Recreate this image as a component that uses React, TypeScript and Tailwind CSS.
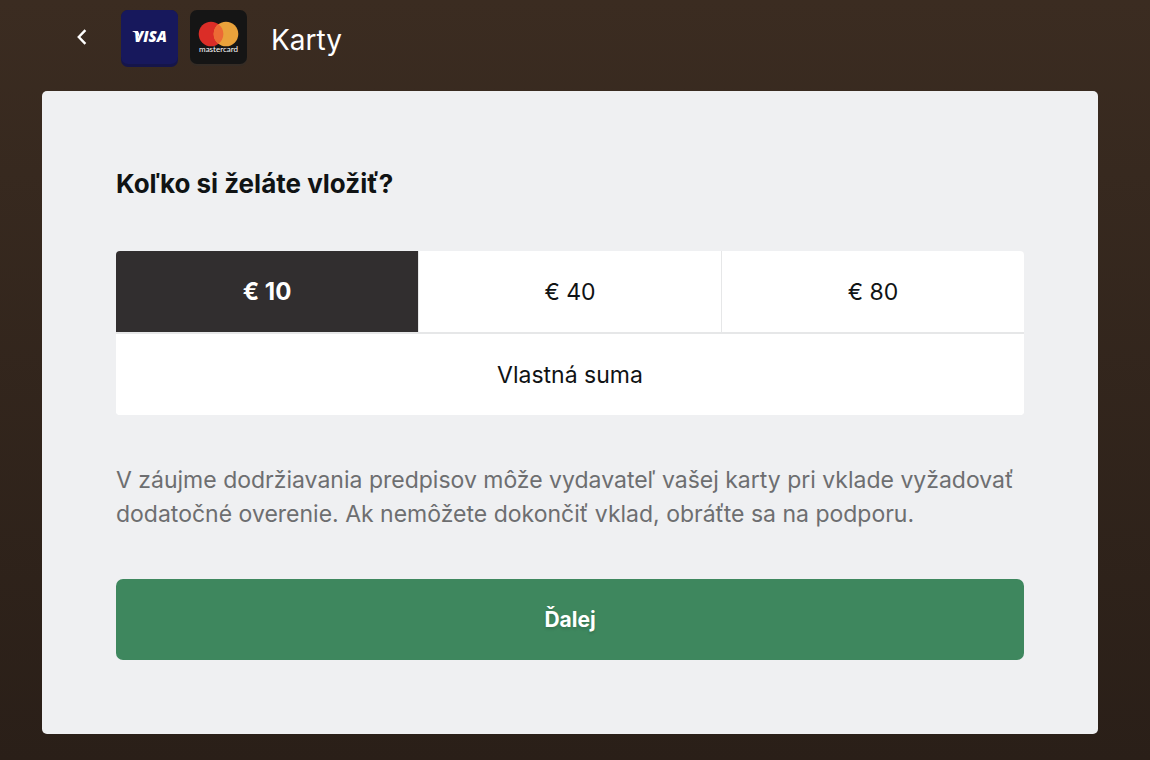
import { useState } from "react";

const amounts = ["€ 10", "€ 40", "€ 80"];

function VisaLogo() {
  return (
    <svg viewBox="0 0 57 57" className="size-[57px]" role="img" aria-label="Visa">
      <rect width="57" height="57" rx="7" fill="#15154a" />
      <rect width="57" height="54" rx="7" fill="#17185c" />
      <path d="M11.5 21H16.6L18.2 23.5L18.6 28.5C17.4 25 15.2 22.6 11.5 21.4Z" fill="#fff" />
      <text x="13" y="32" fill="#fff" fontFamily="Open Sans, sans-serif" fontSize="15" fontWeight="800" fontStyle="italic">
        VISA
      </text>
    </svg>
  );
}

function MastercardLogo() {
  return (
    <svg viewBox="0 0 57 57" className="size-[57px]" role="img" aria-label="Mastercard">
      <rect y="2" width="57" height="54" rx="7" fill="#352c25" />
      <rect width="57" height="54" rx="7" fill="#151515" />
      <circle cx="21" cy="24" r="12.3" fill="#db2d27" />
      <circle cx="36" cy="24" r="12.3" fill="#e9a23b" />
      <path d="M28.5 14.2A12.3 12.3 0 0 1 28.5 33.8A12.3 12.3 0 0 1 28.5 14.2Z" fill="#ec6a35" />
      <text x="28.5" y="42" textAnchor="middle" fill="#ffffff" fontFamily="Lato, sans-serif" fontSize="8" fontWeight="400">
        mastercard
      </text>
    </svg>
  );
}

export default function App() {
  const [selected, setSelected] = useState("€ 10");
  return (
    <div className="min-h-screen bg-linear-to-b from-[#3b2c21] to-[#2a1f18] pr-[52px] pb-[26px] pl-[42px] font-['Inter','Liberation_Sans',sans-serif] text-[#101314]">
      <header className="flex h-[91px] items-start pt-[10px] pl-8 text-white">
        <button type="button" aria-label="Späť" className="mr-8 flex h-[53px] w-[15px] items-center justify-center">
          <svg viewBox="0 0 10 16" className="h-4 w-[10px]" fill="none" stroke="currentColor" strokeWidth="2.4">
            <path d="M8.4 1.2L1.8 8L8.4 14.8" />
          </svg>
        </button>
        <div className="flex gap-3">
          <VisaLogo />
          <MastercardLogo />
        </div>
        <h1 className="ml-6 text-[28px] leading-[60px]">Karty</h1>
      </header>
      <main className="rounded-[5px] bg-[#eff0f2] p-[74px]">
        <h2 className="text-[26px] leading-[38px] font-bold">Koľko si želáte vložiť?</h2>
        <div role="group" aria-label="Suma vkladu" className="mt-12 overflow-hidden rounded-[4px] bg-white text-[23px]">
          <div className="grid grid-cols-3 gap-px border-b-2 border-[#e6e7e8] bg-[#e6e7e8]">
            {amounts.map((a) => (
              <button
                key={a}
                type="button"
                aria-pressed={selected === a}
                onClick={() => setSelected(a)}
                className={selected === a ? "h-[81px] bg-[#312e2f] text-2xl font-bold text-white" : "h-[81px] bg-white pt-0.5"}
              >
                {a}
              </button>
            ))}
          </div>
          <button
            type="button"
            aria-pressed={selected === "custom"}
            onClick={() => setSelected("custom")}
            className={selected === "custom" ? "h-[81px] w-full bg-[#312e2f] text-2xl font-bold text-white" : "h-[81px] w-full bg-white pt-0.5"}
          >
            Vlastná suma
          </button>
        </div>
        <p className="mt-12 text-[23px] leading-[34px] text-[#6d6e70]">
          V záujme dodržiavania predpisov môže vydavateľ vašej karty pri vklade vyžadovať dodatočné overenie. Ak nemôžete dokončiť vklad, obráťte sa na podporu.
        </p>
        <button type="button" className="mt-12 h-[81px] w-full rounded-[7px] bg-[#3e875e] text-[21px] font-bold text-white text-shadow-[0_2px_3px_#00000026]">
          Ďalej
        </button>
      </main>
    </div>
  );
}
